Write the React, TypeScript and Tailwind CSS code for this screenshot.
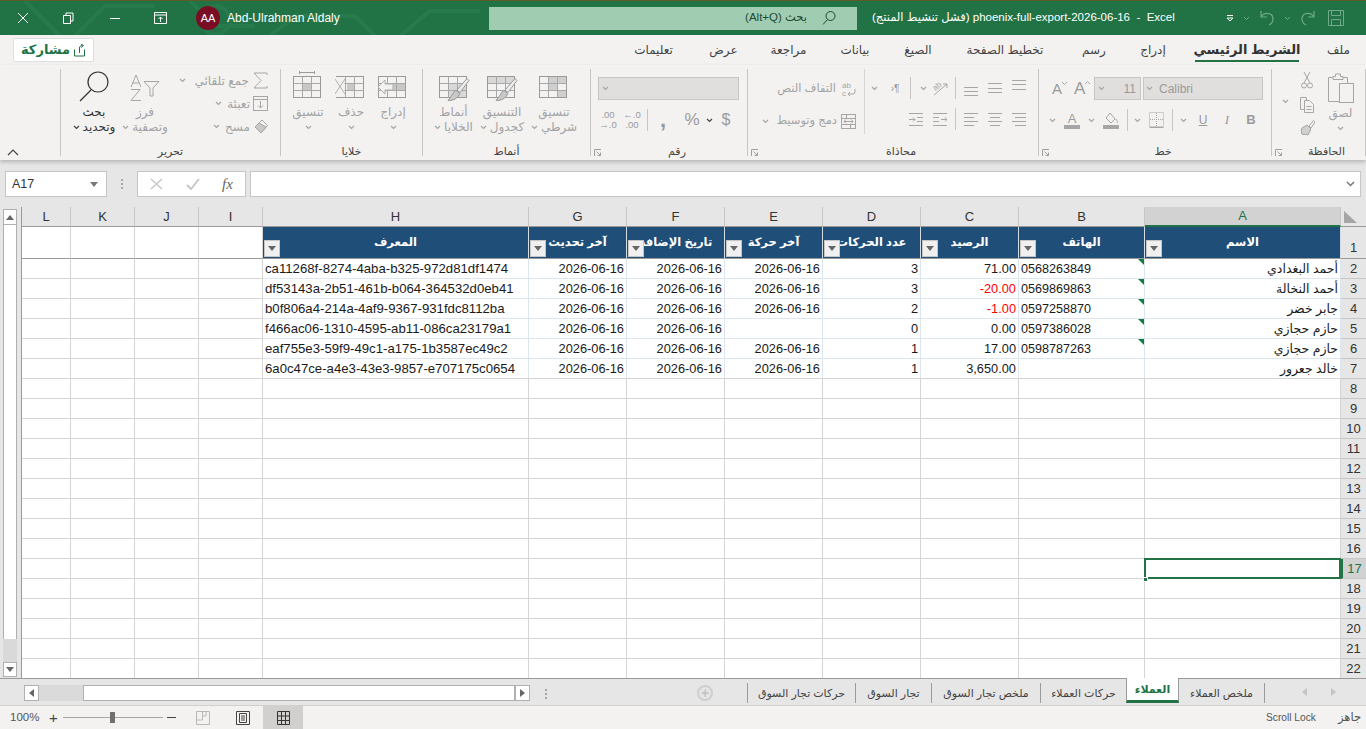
import React from "react";

const font = "font-['Liberation_Sans','DejaVu_Sans',sans-serif]";

const colWidths = "grid-cols-[49px_64px_64px_64px_266px_98px_98px_98px_98px_98px_126px_196px_25px]";
const colLetters = ["L", "K", "J", "I", "H", "G", "F", "E", "D", "C", "B", "A"];
const headers = ["المعرف", "آخر تحديث", "تاريخ الإضافة", "آخر حركة", "عدد الحركات", "الرصيد", "الهاتف", "الاسم"];

const rows = [
  { id: "ca11268f-8274-4aba-b325-972d81df1474", g: "2026-06-16", f: "2026-06-16", e: "2026-06-16", d: "3", c: "71.00", b: "0568263849", a: "أحمد البغدادي" },
  { id: "df53143a-2b51-461b-b064-364532d0eb41", g: "2026-06-16", f: "2026-06-16", e: "2026-06-16", d: "3", c: "-20.00", b: "0569869863", a: "أحمد النخالة" },
  { id: "b0f806a4-214a-4af9-9367-931fdc8112ba", g: "2026-06-16", f: "2026-06-16", e: "2026-06-16", d: "2", c: "-1.00", b: "0597258870", a: "جابر خضر" },
  { id: "f466ac06-1310-4595-ab11-086ca23179a1", g: "2026-06-16", f: "2026-06-16", e: "", d: "0", c: "0.00", b: "0597386028", a: "حازم حجازي" },
  { id: "eaf755e3-59f9-49c1-a175-1b3587ec49c2", g: "2026-06-16", f: "2026-06-16", e: "2026-06-16", d: "1", c: "17.00", b: "0598787263", a: "حازم حجازي" },
  { id: "6a0c47ce-a4e3-43e3-9857-e707175c0654", g: "2026-06-16", f: "2026-06-16", e: "2026-06-16", d: "1", c: "3,650.00", b: "", a: "خالد جعرور" },
];

const tabs = [
  { t: "تعليمات", c: "w-[39px] mr-[36px]" },
  { t: "عرض", c: "w-[29px] mr-[32px]" },
  { t: "مراجعة", c: "w-[37px] mr-[32px]" },
  { t: "بيانات", c: "w-[32px] mr-[32px]" },
  { t: "الصيغ", c: "w-[30px] mr-[32px]" },
  { t: "تخطيط الصفحة", c: "w-[80px] mr-[35px]" },
  { t: "رسم", c: "w-[28px] mr-[32px]" },
  { t: "إدراج", c: "w-[26px] mr-[29px]" },
];

const G = "#a6a6a6";

function Svg({ w, h, children, className }: { w: number; h: number; children: React.ReactNode; className?: string }) {
  return (
    <svg width={w} height={h} viewBox={`0 0 ${w} ${h}`} fill="none" stroke={G} strokeWidth="1" className={`shrink-0 ${className || ""}`}>
      {children}
    </svg>
  );
}

function Chev({ dark }: { dark?: boolean }) {
  return (
    <svg width="7" height="5" viewBox="0 0 7 5" fill="none" stroke={dark ? "#444" : G} strokeWidth="1.2" className="shrink-0">
      <path d="M1 1l2.5 2.5L6 1" />
    </svg>
  );
}

function Launcher() {
  return (
    <svg width="8" height="8" viewBox="0 0 8 8" fill="none" stroke="#a0a0a0" strokeWidth="1" className="block">
      <path d="M.5 7V.5H7M2.500 2.500l4 4M6.500 3.500v3h-3" />
    </svg>
  );
}

function Group({ w, label, launcher, children, px }: { w: string; label: string; launcher?: boolean; children: React.ReactNode; px?: string }) {
  return (
    <div className={`${w} h-[87px] shrink-0 border-r border-[#c8c6c4] flex flex-col`}>
      <div className={`h-[77px] flex ${px || ""}`}>{children}</div>
      <div className={`relative flex-1 flex items-center justify-center text-[11px] leading-[10px] text-[#444] ${launcher ? "pl-[16px]" : ""}`}>
        {launcher && (
          <span className="absolute left-[3px] top-[3px]">
            <Launcher />
          </span>
        )}
        {label}
      </div>
    </div>
  );
}

function BigBtn({ w, icon, lines, chevInline, chevBelow }: { w: string; icon: React.ReactNode; lines: string[]; chevInline?: boolean; chevBelow?: boolean }) {
  return (
    <div className={`${w} shrink-0 flex flex-col items-center pt-[2px] text-[12px] text-[#a3a3a3]`}>
      <div className="h-[31px] flex items-center justify-center">{icon}</div>
      <div className="mt-[3px] leading-[15px] h-[15px] whitespace-nowrap">{lines[0]}</div>
      <div className="leading-[15px] h-[15px] flex items-center gap-[3px] whitespace-nowrap">
        {chevInline && <Chev />}
        {lines[1]}
        {chevBelow && <Chev />}
      </div>
    </div>
  );
}

function TableIcon({ children, over }: { children?: React.ReactNode; over?: React.ReactNode }) {
  return (
    <Svg w={32} h={31}>
      {children}
      <rect x="1.500" y="5.500" width="27" height="21" stroke="#9a9a9a" />
      <path d="M1.500 12.500h27M1.500 19.500h27M10.500 5.500v21M19.500 5.500v21" stroke="#a8a8a8" />
      {over}
    </Svg>
  );
}

function Brush() {
  return (
    <>
      <path d="M29 7.500L19 19l3 2.500L31 9.500z" fill="#ececec" stroke="#9a9a9a" />
      <path d="M18 19.500c-3 1-3 4-5 6l-3 4c4 0 8-1 10-4l2-3z" fill="#c8c8c8" stroke="#9a9a9a" />
    </>
  );
}

function AlignLines({ rows, widths, children }: { rows: number[]; widths: [number, number][]; children?: React.ReactNode }) {
  return (
    <Svg w={14} h={16}>
      {rows.map((y, i) => (
        <path key={i} d={`M${widths[i][0]} ${y}.5H${widths[i][1]}`} stroke={G} />
      ))}
      {children}
    </Svg>
  );
}

function Sep() {
  return <div className="w-px h-[22px] bg-[#c8c6c4] shrink-0" />;
}

function TitleBar() {
  return (
    <div className="relative h-[35px] shrink-0 bg-[#217346] text-white flex items-center overflow-hidden border-t border-[#5f5a2a]">
      <div className="absolute left-[252px] top-[-1px] w-[146px] h-px bg-[#a88a2c]" />
      <div className="absolute left-[1030px] top-[-1px] w-[288px] h-px bg-[#a88a2c]" />
      <svg className="absolute left-0 top-0" width="480" height="35" fill="none" stroke="#277a4c" strokeWidth="4">
        <path d="M20 -5l40 40M75 35l30-30h50M185 -5l30 30h40M215 5a14 14 0 1 0 1 0M270 35l25-20h60l20 20M400 35l30-25h50" />
      </svg>
      <div className="relative w-[45px] flex justify-center">
        <svg width="12" height="12" fill="none" stroke="#fff" strokeWidth="1">
          <path d="M1 1l10 10M11 1L1 11" />
        </svg>
      </div>
      <div className="relative w-[46px] flex justify-center">
        <svg width="11" height="12" fill="none" stroke="#fff" strokeWidth="1">
          <path d="M.5 3.500h7v8h-7zM3 3.500v-2.500h7v8H7.500" />
        </svg>
      </div>
      <div className="relative w-[47px] flex justify-center">
        <div className="w-[10px] h-px bg-white" />
      </div>
      <div className="relative w-[45px] flex justify-center">
        <svg width="14" height="13" fill="none" stroke="#fff" strokeWidth="1">
          <path d="M.5 .5h12v11H.5zM.5 3h12M6.500 10V5M4.500 7l2-2 2 2" />
        </svg>
      </div>
      <div className="relative w-[24px] h-[24px] ml-[13px] rounded-full bg-[#7a0c24] flex items-center justify-center text-[11px]">AA</div>
      <div className="relative ml-[7px] w-[262px] text-[12px] whitespace-nowrap">Abd-Ulrahman Aldaly</div>
      <div className="relative w-[368px] h-[23px] bg-[#a0cdb2] text-[#1e4a33] text-[11.5px] flex items-center justify-end pr-[20px] gap-[14px]">
        <span dir="rtl">بحث (Alt+Q)</span>
        <svg width="16" height="16" fill="none" stroke="#1e4a33" strokeWidth="1">
          <circle cx="9.500" cy="6" r="4.500" />
          <path d="M6.500 9.500L2 14.500" />
        </svg>
      </div>
      <div className="relative ml-[15px] w-[333px] text-[11.5px] whitespace-nowrap" dir="ltr">
        (فشل تنشيط المنتج) phoenix-full-export-2026-06-16 &nbsp;-&nbsp; Excel
      </div>
      <div className="relative ml-[21px] flex items-center gap-[9px]">
        <svg width="8" height="8" fill="none" stroke="#fff" strokeWidth="1">
          <path d="M1 1.500h6M1 4l3 3 3-3z" />
        </svg>
        <svg width="7" height="5" fill="none" stroke="#6fa98a" strokeWidth="1"><path d="M1 1l2.500 2.500L6 1" /></svg>
        <svg width="16" height="18" fill="none" stroke="#6fa98a" strokeWidth="1.2"><path d="M2 2v6h6M2 8c3-5 12-5 12 2 0 3-2 5-4 6" /></svg>
        <svg width="7" height="5" fill="none" stroke="#6fa98a" strokeWidth="1"><path d="M1 1l2.500 2.500L6 1" /></svg>
        <svg width="16" height="18" fill="none" stroke="#6fa98a" strokeWidth="1.2"><path d="M14 2v6H8M14 8C11 3 2 3 2 10c0 3 2 5 4 6" /></svg>
        <svg width="16" height="18" fill="none" stroke="#6fa98a" strokeWidth="1" className="ml-[3px]"><path d="M.5 1.500h15v15H.5zM3.500 1.500v5h9v-5M3.500 16.500v-6h9v6" /></svg>
      </div>
    </div>
  );
}

function TabsBar() {
  return (
    <div className="h-[30px] shrink-0 bg-[#f3f2f1] flex items-center text-[12px] text-[#444] relative">
      <div className="ml-[13px] w-[81px] h-[24px] bg-white rounded-[2px] border border-[#e1dfdd] flex items-center justify-center gap-[3px] text-[#217346] font-bold text-[13px]">
        <span>مشاركة</span>
        <svg width="13" height="13" fill="none" stroke="#217346" strokeWidth="1">
          <path d="M1.500 5.500v6.500h10V5.500M6.500 9V4c0-1.500 1-2.500 3-2.500M8 0l2.500 1.500L8 3.500" />
        </svg>
      </div>
      <div className="ml-[540px] flex items-center">
        {tabs.map((t) => (
          <div key={t.t} className={`${t.c} text-center whitespace-nowrap flex justify-center`}>
            {t.t}
          </div>
        ))}
        <div className="w-[104px] h-[30px] flex flex-col items-center justify-center relative font-bold text-[#333] text-[13px] whitespace-nowrap">
          الشريط الرئيسي
          <div className="absolute left-0 right-0 bottom-[3px] h-[2px] bg-[#217346]" />
        </div>
        <div className="ml-[28px] whitespace-nowrap">ملف</div>
      </div>
    </div>
  );
}

function Ribbon() {
  return (
    <div className="h-[95px] shrink-0 bg-[#f3f2f1] flex items-start pt-[4px] relative shadow-[0_2px_4px_rgba(0,0,0,0.22)] z-10">
      <div className="w-[61px] h-[87px] shrink-0 border-r border-[#c8c6c4] flex items-end pl-[7px]">
        <svg width="12" height="7" fill="none" stroke="#444" strokeWidth="1.2">
          <path d="M1 6l5-5 5 5" />
        </svg>
      </div>

      <Group w="w-[220px]" label="تحرير">
        <div className="w-[66px] shrink-0 flex flex-col items-center pt-[2px] text-[12px] text-[#333]">
          <svg width="32" height="31" fill="none" stroke="#333" strokeWidth="1.2">
            <circle cx="20" cy="11" r="10" />
            <path d="M13 19L2 30" />
          </svg>
          <div className="mt-[3px] h-[15px] leading-[15px]">بحث</div>
          <div className="h-[15px] leading-[15px] flex items-center gap-[3px] whitespace-nowrap">
            <Chev dark />
            وتحديد
          </div>
        </div>
        <div className="w-[36px] shrink-0 flex flex-col items-center pt-[2px] text-[12px] text-[#a3a3a3]">
          <Svg w={30} h={31}>
            <path d="M1 16L6 4l5 12M3 12h6M1 18.500h9L1 29.500h10" />
            <path d="M14 10.500h15l-6 6.500v8h-3v-8z" />
          </Svg>
          <div className="mt-[3px] h-[15px] leading-[15px]">فرز</div>
          <div className="h-[15px] leading-[15px] flex items-center gap-[3px] whitespace-nowrap">
            <Chev />
            وتصفية
          </div>
        </div>
        <div className="flex-1 flex flex-col items-end pr-[12px] pt-[2px] text-[12px] text-[#a3a3a3] gap-[4px]">
          <div className="h-[19px] flex items-center whitespace-nowrap">
            <Chev />
            <span className="ml-[9px] mr-[4px]">جمع تلقائي</span>
            <Svg w={15} h={17}>
              <path d="M14 3V1H1l7 7.500L1 16h13v-2" />
            </Svg>
          </div>
          <div className="h-[19px] flex items-center whitespace-nowrap">
            <Chev />
            <span className="ml-[5px] mr-[3px]">تعبئة</span>
            <Svg w={15} h={15}>
              <rect x=".5" y=".5" width="14" height="14" />
              <path d="M.5 3.500h14M7.500 5v7M5 9.500l2.500 2.500L10 9.500" />
            </Svg>
          </div>
          <div className="h-[19px] flex items-center whitespace-nowrap">
            <Chev />
            <span className="ml-[5px] mr-[3px]">مسح</span>
            <Svg w={15} h={15}>
              <path d="M9 1l5.500 5.500L8 14 2 8z" />
              <path d="M2 8l4-4 7 4-5 6z" fill="#c8c8c8" />
            </Svg>
          </div>
        </div>
      </Group>

      <Group w="w-[142px]" label="خلايا" px="pl-[5px]">
        <BigBtn
          w="w-[44px]"
          lines={["تنسيق", ""]}
          icon={
            <TableIcon>
              <path d="M10.500 12.500h9v7h-9z" fill="#c8c8c8" stroke="none" />
              <path d="M7.500 0v3M22.500 0v3M7.500 1.500h15" stroke="#9a9a9a" />
            </TableIcon>
          }
          chevBelow
        />
        <BigBtn
          w="w-[42px]"
          lines={["حذف", ""]}
          icon={
            <TableIcon
              over={
                <>
                  <path d="M0 6h9.500v20H0z" fill="#f3f2f1" stroke="none" />
                  <path d="M0 8l10 15M10 8L0 23" stroke="#b0b0b0" />
                </>
              }
            >
              <path d="M12 12.500h7.500v7H12z" fill="#c8c8c8" stroke="none" />
            </TableIcon>
          }
          chevBelow
        />
        <BigBtn
          w="w-[42px]"
          lines={["إدراج", ""]}
          icon={
            <TableIcon over={<path d="M8 9l-7 7 7 7v-4h8v-6H8z" fill="#f3f2f1" stroke="#b0b0b0" />}>
              <path d="M12 12.500h17v7H12z" fill="#c8c8c8" stroke="none" />
            </TableIcon>
          }
          chevBelow
        />
      </Group>

      <Group w="w-[168px]" label="أنماط" px="pl-[7px]">
        <BigBtn
          w="w-[47px]"
          lines={["أنماط", "الخلايا"]}
          chevInline
          icon={
            <TableIcon over={<Brush />}>
              <path d="M10.500 12.500h18v14h-18z" fill="#d8d8d8" stroke="none" />
            </TableIcon>
          }
        />
        <BigBtn
          w="w-[50px]"
          lines={["التنسيق", "كجدول"]}
          chevInline
          icon={
            <TableIcon over={<Brush />}>
              <path d="M1.500 5.500h27v7h-27z" fill="#d8d8d8" stroke="none" />
            </TableIcon>
          }
        />
        <BigBtn
          w="w-[54px]"
          lines={["تنسيق", "شرطي"]}
          chevInline
          icon={
            <TableIcon>
              <path d="M10.500 5.500h18v7h-18zM10.500 12.500h9v7h-9zM19.500 19.500h9v7h-9z" fill="#cfcfcf" stroke="none" />
            </TableIcon>
          }
        />
      </Group>

      <Group w="w-[157px]" label="رقم" launcher px="pl-[7px]">
        <div className="flex-1 flex flex-col pt-[8px] pr-[8px]">
          <div className="h-[23px] bg-[#e1dfdd] border border-[#c8c6c4] flex items-center pl-[3px]">
            <Chev />
          </div>
          <div className="mt-[9px] flex items-center text-[#9a9a9a] h-[22px]">
            <div className="w-[20px] text-[9.5px] leading-[10px] text-center whitespace-nowrap">
              .00
              <br />
              →.0
            </div>
            <div className="w-[22px] ml-[3px] text-[9.5px] leading-[10px] text-center whitespace-nowrap">
              ←.0
              <br />
              .00
            </div>
            <div className="ml-[4px]">
              <Sep />
            </div>
            <div className="w-[30px] text-center font-bold text-[22px] leading-[14px]">,</div>
            <div className="w-[28px] text-center text-[17px]">%</div>
            <Chev dark />
            <div className="w-[26px] text-center text-[16px]">$</div>
          </div>
        </div>
      </Group>

      <Group w="w-[291px]" label="محاذاة" launcher>
        <div className="w-[117px] shrink-0 h-[65px] border-r border-[#d8d6d4] flex flex-col items-end pr-[8px] pt-[9px] text-[11.5px] text-[#a3a3a3]">
          <div className="h-[22px] flex items-center gap-[6px] whitespace-nowrap">
            التفاف النص
            <Svg w={14} h={16}>
              <text x="0" y="7" fontSize="8" fill={G} stroke="none" fontFamily="Liberation Sans">ab</text>
              <text x="0" y="15" fontSize="8" fill={G} stroke="none" fontFamily="Liberation Sans">c</text>
              <path d="M13 8v3a2 2 0 0 1-2 2H6M8 11l-2 2 2 2" />
            </Svg>
          </div>
          <div className="h-[22px] mt-[10px] flex items-center whitespace-nowrap">
            <Chev />
            <span className="ml-[7px] mr-[4px]">دمج وتوسيط</span>
            <Svg w={15} h={15}>
              <rect x=".5" y=".5" width="14" height="14" />
              <path d="M.5 4.500h14M.5 10.500h14M3 7.500h9M5 5.500l-2 2 2 2M10 5.500l2 2-2 2M5.500 .5v4M9.500 10.500v4" />
            </Svg>
          </div>
        </div>
        <div className="flex-1 flex flex-col pt-[8px] gap-[9px]">
          <div className="h-[22px] flex items-center text-[#9a9a9a]">
            <div className="ml-[6px]"><Chev /></div>
            <div className="w-[12px] ml-[11px] text-[10px] text-center whitespace-nowrap">›¶</div>
            <div className="ml-[9px]"><Sep /></div>
            <div className="ml-[9px]"><Chev /></div>
            <Svg w={17} h={15} className="ml-[5px]">
              <path d="M2 14L15 3M11 3h4v4" />
              <text x="1" y="8" fontSize="8" fill={G} stroke="none" fontFamily="Liberation Sans" transform="rotate(-40 5 6)">ab</text>
            </Svg>
            <div className="ml-[6px]"><Sep /></div>
            <div className="ml-[8px]"><AlignLines rows={[7, 11, 15]} widths={[[0, 14], [0, 14], [0, 14]]} /></div>
            <div className="ml-[10px]"><AlignLines rows={[3, 8, 12]} widths={[[0, 14], [0, 14], [0, 14]]} /></div>
            <div className="ml-[10px]"><AlignLines rows={[0, 4, 9]} widths={[[0, 14], [0, 14], [0, 14]]} /></div>
          </div>
          <div className="h-[22px] flex items-center">
            <div className="ml-[44px]">
              <AlignLines rows={[2, 14]} widths={[[0, 14], [0, 14]]}>
                <path d="M0 8.500h6M4 6.500l2 2-2 2M8 6.500h6M8 10.500h6" />
              </AlignLines>
            </div>
            <div className="ml-[10px]">
              <AlignLines rows={[2, 14]} widths={[[0, 14], [0, 14]]}>
                <path d="M0 6.500h6M0 10.500h6M8 8.500h6M12 6.500l2 2-2 2" />
              </AlignLines>
            </div>
            <div className="ml-[8px]"><Sep /></div>
            <div className="ml-[8px]"><AlignLines rows={[2, 6, 10, 14]} widths={[[0, 14], [0, 10], [0, 14], [0, 10]]} /></div>
            <div className="ml-[10px]"><AlignLines rows={[2, 6, 10, 14]} widths={[[0, 14], [2, 12], [0, 14], [2, 12]]} /></div>
            <div className="ml-[10px]"><AlignLines rows={[2, 6, 10, 14]} widths={[[0, 14], [3, 14], [0, 14], [3, 14]]} /></div>
          </div>
        </div>
      </Group>

      <Group w="w-[233px]" label="خط" launcher>
        <div className="flex-1 flex flex-col pt-[8px] pr-[8px] text-[#9a9a9a]">
          <div className="h-[23px] flex items-center">
            <div className="ml-[13px] w-[18px] flex items-start text-[15px] leading-[15px]">
              A
              <svg width="5" height="3" fill="none" stroke={G} className="mt-[1px]"><path d="M0 0l2.500 2.500L5 0" /></svg>
            </div>
            <div className="ml-[4px] w-[20px] flex items-start text-[17px] leading-[17px]">
              A
              <svg width="5" height="3" fill="none" stroke={G} className="mt-[1px]"><path d="M0 3l2.500-2.500L5 3" /></svg>
            </div>
            <div className="w-[47px] h-[23px] bg-[#e1dfdd] border border-[#c8c6c4] flex items-center justify-between px-[3px] text-[12px]">
              <Chev />
              <span className="mr-[1px]">11</span>
            </div>
            <div className="flex-1 ml-[2px] h-[23px] bg-[#e1dfdd] border border-[#c8c6c4] flex items-center gap-[6px] px-[2px] text-[12px]">
              <Chev />
              Calibri
            </div>
          </div>
          <div className="mt-[9px] h-[22px] flex items-center">
            <div className="ml-[10px]"><Chev /></div>
            <div className="ml-[8px] w-[16px] text-center text-[13px] leading-[13px] border-b-[4px] border-[#a6a6a6]">A</div>
            <div className="ml-[8px]"><Chev /></div>
            <Svg w={16} h={17} className="ml-[8px]">
              <path d="M7 1l5 6-4 4-5-5zM13 7c1 2 2 3 1 4" />
              <path d="M0 13h16v4H0z" fill={G} stroke="none" />
            </Svg>
            <div className="ml-[8px]"><Sep /></div>
            <div className="ml-[6px]"><Chev /></div>
            <Svg w={15} h={16} className="ml-[8px]">
              <rect x=".5" y=".5" width="14" height="14" strokeDasharray="1 1" />
              <path d="M7.500 1v13M1 7.500h13" strokeDasharray="1 1" />
              <path d="M.5 15.500h14" />
            </Svg>
            <div className="ml-[8px]"><Sep /></div>
            <div className="ml-[7px]"><Chev /></div>
            <div className="ml-[11px] w-[10px] text-[12px] leading-[13px] underline text-center">U</div>
            <div className="ml-[14px] w-[10px] text-[13px] italic text-center font-['Liberation_Serif',serif]">I</div>
            <div className="ml-[14px] w-[10px] text-[13px] font-bold text-center">B</div>
          </div>
        </div>
      </Group>

      <Group w="w-[94px]" label="الحافظة" launcher>
        <div className="ml-[10px] w-[8px] h-[64px] flex items-center">
          <Chev />
        </div>
        <div className="ml-[8px] w-[17px] flex flex-col items-center pt-[3px]">
          <Svg w={12} h={17}>
            <path d="M3 0l6 11M9 0L3 11" />
            <circle cx="3" cy="13.500" r="2.500" />
            <circle cx="9" cy="13.500" r="2.500" />
          </Svg>
          <Svg w={15} h={16} className="mt-[8px]">
            <path d="M5 12.500H1.500v-12h6v3" />
            <path d="M5.500 3.500h5l4 4v8h-9z" />
            <path d="M7.500 9.500h5M7.500 12.500h5" />
          </Svg>
          <Svg w={16} h={16} className="mt-[7px]">
            <path d="M10 6l4.500-5.500L16 2l-4 6z" />
            <path d="M3 8l5-3 4 4-3 6-2-1-1 1-1-1-1 1-2-2 1-1-1-1z" fill="#d0d0d0" />
          </Svg>
        </div>
        <div className="ml-[12px] w-[27px] flex flex-col items-center pt-[4px] text-[12px] text-[#a3a3a3]">
          <Svg w={27} h={30}>
            <path d="M6 4.500H1.500v24H12M16 4.500h4.500V10" />
            <path d="M6 6.500v-3h2.500V1h5v2.500H16v3z" />
            <rect x="12.500" y="10.500" width="14" height="19" />
          </Svg>
          <div className="mt-[3px] h-[15px] leading-[15px] whitespace-nowrap">لصق</div>
          <div className="h-[15px] flex items-center">
            <Chev />
          </div>
        </div>
      </Group>
    </div>
  );
}

function FormulaBar() {
  return (
    <div className="h-[47px] shrink-0 bg-[#e6e6e6] flex pt-[11px] pl-[5px]">
      <div className="w-[102px] h-[26px] bg-white border border-[#c6c6c6] flex items-center justify-between pl-[6px] pr-[8px] text-[12.5px] text-[#333]">
        A17
        <svg width="8" height="5"><path d="M0 0h8L4 5z" fill="#777" /></svg>
      </div>
      <div className="w-[30px] flex justify-center items-start pt-[8px]">
        <div className="flex flex-col gap-[2px]">
          <div className="w-[2px] h-[2px] bg-[#a6a6a6]" />
          <div className="w-[2px] h-[2px] bg-[#a6a6a6]" />
          <div className="w-[2px] h-[2px] bg-[#a6a6a6]" />
        </div>
      </div>
      <div className="w-[109px] h-[26px] bg-white border border-[#c6c6c6] flex items-center pl-[12px] gap-[23px]">
        <svg width="13" height="12" fill="none" stroke="#c8c8c8" strokeWidth="1.6"><path d="M1 1l11 10M12 1L1 11" /></svg>
        <svg width="14" height="12" fill="none" stroke="#c8c8c8" strokeWidth="2"><path d="M1 7l4 4 8-10" /></svg>
        <span className="text-[15px] italic text-[#666] font-['Liberation_Serif',serif] -ml-[1px]">fx</span>
      </div>
      <div className="ml-[4px] w-[1111px] h-[26px] bg-white border border-[#c6c6c6] flex items-center justify-end pr-[5px]">
        <svg width="9" height="6" fill="none" stroke="#777" strokeWidth="1.5"><path d="M1 1l3.500 3.500L8 1" /></svg>
      </div>
    </div>
  );
}

function FilterBtn() {
  return (
    <div className="absolute left-px bottom-px w-[16px] h-[17px] bg-[#f0f0f0] border border-[#c6c6c6] flex items-center justify-center z-10">
      <svg width="8" height="5"><path d="M0 0h8L4 5z" fill="#666" /></svg>
    </div>
  );
}

function Cell({ text, right, red, size, mark, last }: { text?: string; right?: boolean; red?: boolean; size?: string; mark?: boolean; last?: boolean }) {
  return (
    <div
      className={`relative h-[20px] border-r border-b ${last ? "border-b-[#d4d4d4]" : ""} border-[#dce6f1] flex items-center px-[2px] pt-px whitespace-nowrap overflow-hidden ${right ? "justify-end" : ""} ${red ? "text-[#ff0000]" : ""} ${size || ""}`}
    >
      {text}
      {mark && <div className="absolute right-0 top-0 w-0 h-0 border-t-[6px] border-l-[6px] border-t-[#107c41] border-l-transparent" />}
    </div>
  );
}

function Plain() {
  return <div className="h-[20px] border-r border-b border-[#d4d4d4]" />;
}

function RowNum({ n, active }: { n: number; active?: boolean }) {
  return (
    <div
      className={`h-[20px] border-b border-[#c6c6c6] flex items-center justify-center text-[13px] ${active ? "bg-[#d2d2d2] text-[#217346] border-l-2 border-l-[#217346]" : "bg-[#e6e6e6] text-[#333]"}`}
    >
      {n}
    </div>
  );
}

function Sheet() {
  return (
    <div className="h-[471px] shrink-0 flex bg-[#e6e6e6]">
      <div className="w-[22px] shrink-0 flex flex-col pl-[3px] pr-[4px] border-r border-[#9a9a9a]">
        <div className="h-[16px] mt-[2px] bg-white border border-[#b0b0b0] flex items-center justify-center">
          <svg width="8" height="5"><path d="M4 0l4 5H0z" fill="#666" /></svg>
        </div>
        <div className="flex-1 bg-white border-x border-[#b0b0b0]" />
        <div className="h-[23px] bg-[#d9d9d9]" />
        <div className="h-[15px] mb-[1px] bg-white border border-[#b0b0b0] flex items-center justify-center">
          <svg width="8" height="5"><path d="M0 0h8L4 5z" fill="#666" /></svg>
        </div>
      </div>
      <div className={`flex-1 grid ${colWidths} content-start text-[12.8px] text-[#1a1a1a] bg-white`}>
        {colLetters.map((c) => (
          <div
            key={c}
            className={`h-[20px] flex items-center justify-center text-[13px] border-r border-[#c6c6c6] ${c === "A" ? "bg-[#d2d2d2] text-[#217346] border-b-2 border-b-[#217346]" : "bg-[#e6e6e6] text-[#333] border-b border-b-[#9a9a9a]"}`}
          >
            {c}
          </div>
        ))}
        <div className="h-[20px] bg-[#e6e6e6] border-b border-[#9a9a9a] flex items-center justify-center pr-[6px]">
          <svg width="15" height="12"><path d="M1 0l13 12H1z" fill="#a6a6a6" /></svg>
        </div>

        {[0, 1, 2, 3].map((i) => (
          <div key={i} className="h-[32px] border-r border-b border-[#d4d4d4] border-b-[#9a9a9a]" />
        ))}
        {headers.map((h) => (
          <div key={h} className="relative h-[32px] bg-[#1f4e78] border-r border-white/80 border-b border-b-[#9a9a9a] text-white font-bold text-[11.5px] flex justify-center pt-[7px] whitespace-nowrap overflow-hidden">
            {h}
            <FilterBtn />
          </div>
        ))}
        <div className="h-[32px] bg-[#e6e6e6] border-b border-[#9a9a9a] flex items-end justify-center text-[13px] text-[#333] pb-[1px]">1</div>

        {Array.from({ length: 21 }, (_, r) => {
          const row = rows[r];
          const n = r + 2;
          const isA17 = n === 17;
          return (
            <React.Fragment key={n}>
              <Plain />
              <Plain />
              <Plain />
              <Plain />
              {row ? (
                <>
                  <Cell text={row.id} size="text-[13.2px]" last={r === 5} />
                  <Cell text={row.g} right last={r === 5} />
                  <Cell text={row.f} right last={r === 5} />
                  <Cell text={row.e} right last={r === 5} />
                  <Cell text={row.d} right last={r === 5} />
                  <Cell text={row.c} right red={row.c.startsWith("-")} last={r === 5} />
                  <Cell text={row.b} size="text-[12.6px]" mark={!!row.b} last={r === 5} />
                  <Cell text={row.a} right size="text-[12.5px]" last={r === 5} />
                </>
              ) : (
                <>
                  <Plain />
                  <Plain />
                  <Plain />
                  <Plain />
                  <Plain />
                  <Plain />
                  <Plain />
                  {isA17 ? (
                    <div className="relative h-[20px]">
                      <div className="absolute -left-px -top-px w-[197px] h-[21px] border-2 border-[#217346]" />
                      <div className="absolute -left-[2px] bottom-[-3px] w-[5px] h-[5px] bg-[#217346] border border-white" />
                    </div>
                  ) : (
                    <Plain />
                  )}
                </>
              )}
              <RowNum n={n} active={isA17} />
            </React.Fragment>
          );
        })}
      </div>
    </div>
  );
}

function SheetTabs() {
  const tab = "h-[20px] flex items-center justify-center border-l border-[#9a9a9a] whitespace-nowrap";
  return (
    <div className="h-[28px] shrink-0 bg-[#e6e6e6] border-t border-[#9a9a9a] flex text-[11px] text-[#444] border-b border-b-[#d0d0d0]">
      <div className="ml-[24px] mt-[6px] w-[506px] h-[16px] flex">
        <div className="w-[15px] h-[16px] bg-white border border-[#b0b0b0] flex items-center justify-center">
          <svg width="5" height="8"><path d="M5 0v8L0 4z" fill="#666" /></svg>
        </div>
        <div className="w-[44px] bg-[#dadada]" />
        <div className="flex-1 bg-white border border-[#b0b0b0]" />
        <div className="w-[15px] h-[16px] bg-white border border-[#b0b0b0] flex items-center justify-center">
          <svg width="5" height="8"><path d="M0 0v8l5-4z" fill="#666" /></svg>
        </div>
      </div>
      <div className="ml-[15px] mt-[10px] flex flex-col gap-[2px] h-[10px]">
        <div className="w-[2px] h-[2px] bg-[#a6a6a6]" />
        <div className="w-[2px] h-[2px] bg-[#a6a6a6]" />
        <div className="w-[2px] h-[2px] bg-[#a6a6a6]" />
      </div>
      <div className="ml-[150px] mt-[6px] w-[16px] h-[16px] rounded-full border-2 border-[#cfcfcf] flex items-center justify-center text-[#c4c4c4] text-[14px] font-bold leading-[12px]">+</div>
      <div className="ml-[34px] flex items-start pt-[4px]">
        <div className={`${tab} w-[108px]`}>حركات تجار السوق</div>
        <div className={`${tab} w-[76px]`}>تجار السوق</div>
        <div className={`${tab} w-[109px]`}>ملخص تجار السوق</div>
        <div className={`${tab} w-[86px]`}>حركات العملاء</div>
      </div>
      <div className="w-[53px] h-[25px] -mt-px bg-white border-x border-[#9a9a9a] border-b-[3px] border-b-[#217346] flex items-center justify-center text-[#217346] font-bold">
        العملاء
      </div>
      <div className="w-[86px] h-[20px] mt-[4px] flex items-center justify-center border-r border-[#9a9a9a] whitespace-nowrap">ملخص العملاء</div>
      <div className="ml-[37px] mt-[9px] flex gap-[24px]">
        <svg width="5" height="8"><path d="M5 0v8L0 4z" fill="#c4c4c4" /></svg>
        <svg width="5" height="8"><path d="M0 0v8l5-4z" fill="#c4c4c4" /></svg>
      </div>
    </div>
  );
}

function StatusBar() {
  return (
    <div className="h-[23px] shrink-0 bg-[#f3f2f1] flex items-center text-[11.5px] text-[#555]">
      <div className="ml-[10px] w-[30px]">100%</div>
      <div className="ml-[9px] w-[10px] text-[15px] text-[#444] leading-[15px]">+</div>
      <div className="relative ml-[4px] w-[100px] h-px bg-[#a6a6a6]">
        <div className="absolute left-[47px] -top-[5px] w-[5px] h-[11px] bg-[#707070]" />
      </div>
      <div className="ml-[4px] w-[9px] h-px bg-[#444]" />
      <svg width="14" height="14" fill="none" stroke="#b8b8b8" className="ml-[20px]"><path d="M.5 .5h13v13H.5zM.5 9h6V.5M6.500 5H10V.5" /></svg>
      <svg width="14" height="14" fill="none" stroke="#444" className="ml-[26px]"><path d="M.5 .5h13v13H.5zM3.500 2.500h7v9h-7zM5 5h4M5 7h4M5 9h4" /></svg>
      <div className="ml-[13px] w-[40px] h-[23px] bg-[#d2d0ce] flex items-center justify-center">
        <svg width="13" height="14" fill="none" stroke="#333"><path d="M.5 .5h12v13H.5zM.5 5h12M.5 9.500h12M4.500 .5v13M8.500 .5v13" /></svg>
      </div>
      <div className="ml-[963px] w-[50px] text-[10.2px] whitespace-nowrap">Scroll Lock</div>
      <div className="ml-[22px] whitespace-nowrap">جاهز</div>
    </div>
  );
}

export default function App() {
  return (
    <div className={`${font} w-[1366px] h-[729px] overflow-hidden flex flex-col bg-[#e6e6e6]`} dir="ltr">
      <TitleBar />
      <TabsBar />
      <Ribbon />
      <FormulaBar />
      <Sheet />
      <SheetTabs />
      <StatusBar />
    </div>
  );
}
